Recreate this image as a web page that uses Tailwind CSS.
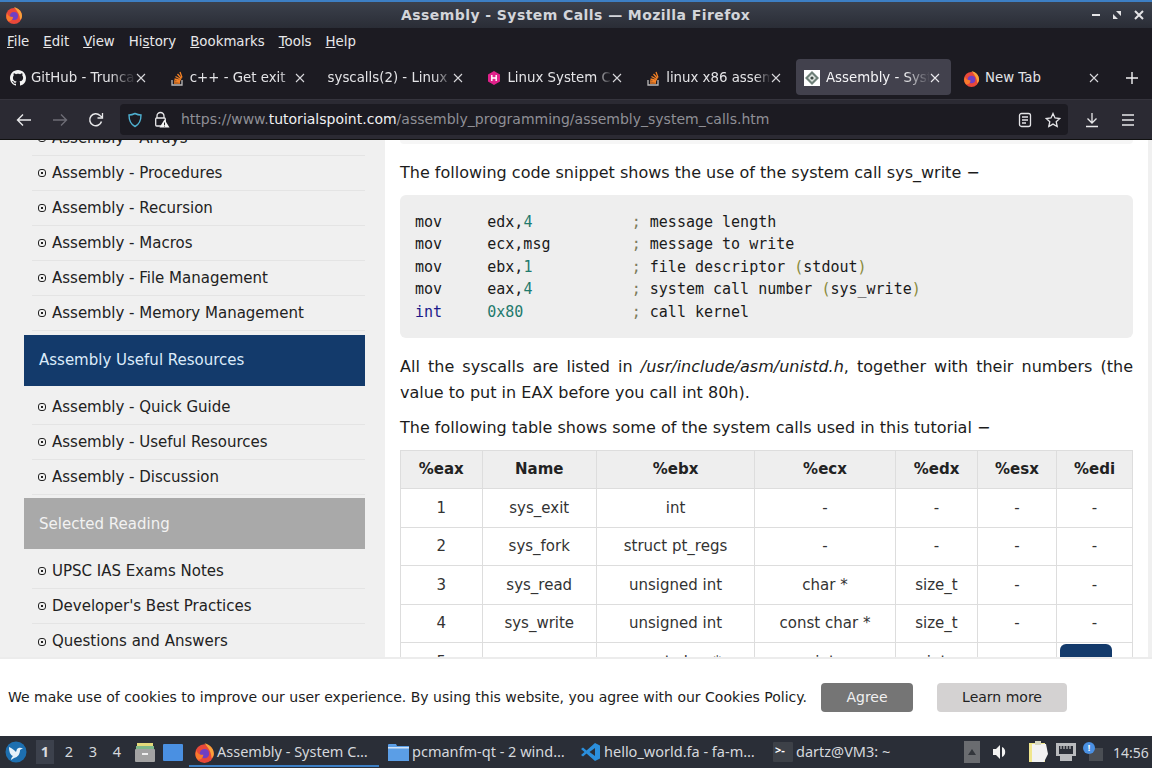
<!DOCTYPE html>
<html lang="en">
<head>
  <meta charset="UTF-8">
  <title>Assembly - System Calls</title>
  <script src="https://cdn.jsdelivr.net/npm/@tailwindcss/browser@4"></script>
</head>
<body class="w-[1152px] h-[768px] overflow-hidden flex flex-col bg-[#1c1b22] font-['DejaVu_Sans',sans-serif]">

  <!-- Window title bar -->
  <div class="h-[2px] bg-[#3d7fc4]"></div>
  <div class="h-[26px] flex items-center bg-gradient-to-b from-[#3c414c] to-[#2a2d36]">
    <div class="w-[401px] pl-[5px] flex">
      <svg class="w-[18px] h-[18px]" viewBox="0 0 18 18"><circle cx="9" cy="10" r="8" fill="#e8483a"/><path d="M9 1c4 1 8 4 8 9 0 2-1 3-2 4 0-5-2-8-6-13z" fill="#f9a13a"/><circle cx="9" cy="10" r="4" fill="#6f3fc4"/><path d="M2 7c1 3 3 4 6 4 0 2-2 5-5 4-2-2-2-5-1-8z" fill="#f97a2c"/></svg>
    </div>
    <div class="w-[349px] text-[14px] font-bold text-[#d3d5da] tracking-[0.43px] whitespace-nowrap">Assembly - System Calls — Mozilla Firefox</div>
    <div class="flex-1 flex justify-end items-center gap-[12px] pr-[8px]">
      <div class="w-[8px] h-[2px] bg-[#e4e4e6]"></div>
      <svg class="w-[10px] h-[10px]" viewBox="0 0 10 10" fill="#e4e4e6"><path d="M4 1h5v5zM6 9H1V4z"/></svg>
      <svg class="w-[10px] h-[10px]" viewBox="0 0 10 10" stroke="#e4e4e6" stroke-width="2"><path d="M1 1l8 8M9 1l-8 8"/></svg>
    </div>
  </div>

  <!-- Menu bar -->
  <div class="h-[26px] pt-[2px] flex items-center gap-[14px] pl-[7px] bg-[#1c1b22] text-[13.33px] text-[#e8e8ea]">
    <span><u>F</u>ile</span><span><u>E</u>dit</span><span><u>V</u>iew</span><span>Hi<u>s</u>tory</span><span><u>B</u>ookmarks</span><span><u>T</u>ools</span><span><u>H</u>elp</span>
  </div>

  <!-- Tab strip -->
  <div class="h-[45px] pt-[1px] flex items-center bg-[#1c1b22] text-[13.33px] text-[#e4e4e7]">
    <div class="w-[158.8px] h-[36px] pt-[2px] flex items-center pl-[10px] pr-[13px] shrink-0">
      <svg class="w-[16px] h-[16px] mr-[5px] shrink-0" viewBox="0 0 16 16" fill="#f4f4f4"><path d="M8 0C3.58 0 0 3.58 0 8c0 3.54 2.29 6.53 5.47 7.59.4.07.55-.17.55-.38 0-.19-.01-.82-.01-1.49-2.01.37-2.53-.49-2.69-.94-.09-.23-.48-.94-.82-1.13-.28-.15-.68-.52-.01-.53.63-.01 1.08.58 1.23.82.72 1.21 1.87.87 2.33.66.07-.52.28-.87.51-1.07-1.78-.2-3.64-.89-3.64-3.95 0-.87.31-1.59.82-2.15-.08-.2-.36-1.02.08-2.12 0 0 .67-.21 2.2.82.64-.18 1.32-.27 2-.27s1.36.09 2 .27c1.53-1.04 2.2-.82 2.2-.82.44 1.1.16 1.92.08 2.12.51.56.82 1.27.82 2.15 0 3.07-1.87 3.75-3.65 3.95.29.25.54.73.54 1.48 0 1.07-.01 1.93-.01 2.2 0 .21.15.46.55.38A8.01 8.01 0 0016 8c0-4.42-3.58-8-8-8z"/></svg>
      <span class="flex-1 overflow-hidden whitespace-nowrap [mask-image:linear-gradient(to_right,black_75%,transparent)]">GitHub - Truncate</span>
      <svg class="w-[10px] h-[10px] shrink-0" viewBox="0 0 10 10" stroke="#d8d8dc" stroke-width="1.1"><path d="M1 1l8 8M9 1l-8 8"/></svg>
    </div>
    <div class="w-[158.8px] h-[36px] pt-[2px] flex items-center pl-[10px] pr-[13px] shrink-0">
      <svg class="w-[16px] h-[16px] mr-[5px] shrink-0" viewBox="0 0 16 16" fill="none"><path d="M3 10v5h10v-5" stroke="#bcbbbb" stroke-width="1.3"/><path d="M5 13h6M5 11l6 .5M5.5 9l6 1.5M6.5 6.5l5.5 3M8.5 4l4 4.5M11 2l2 5.5" stroke="#f48024" stroke-width="1.3"/></svg>
      <span class="flex-1 overflow-hidden whitespace-nowrap [mask-image:linear-gradient(to_right,black_85%,transparent)]">c++ - Get exit</span>
      <svg class="w-[10px] h-[10px] shrink-0" viewBox="0 0 10 10" stroke="#d8d8dc" stroke-width="1.1"><path d="M1 1l8 8M9 1l-8 8"/></svg>
    </div>
    <div class="w-[158.8px] h-[36px] pt-[2px] flex items-center pl-[10px] pr-[13px] shrink-0">
      <span class="flex-1 overflow-hidden whitespace-nowrap [mask-image:linear-gradient(to_right,black_85%,transparent)]">syscalls(2) - Linux manual</span>
      <svg class="w-[10px] h-[10px] shrink-0" viewBox="0 0 10 10" stroke="#d8d8dc" stroke-width="1.1"><path d="M1 1l8 8M9 1l-8 8"/></svg>
    </div>
    <div class="w-[158.8px] h-[36px] pt-[2px] flex items-center pl-[10px] pr-[13px] shrink-0">
      <svg class="w-[16px] h-[16px] mr-[5px] shrink-0" viewBox="0 0 16 16"><path d="M8 1l6 3.500v7L8 15l-6-3.500v-7z" fill="#e0218a"/><path d="M5.800 5v6M10.200 5v6M5.800 8h4.400" stroke="#fff" stroke-width="1.400"/></svg>
      <span class="flex-1 overflow-hidden whitespace-nowrap [mask-image:linear-gradient(to_right,black_85%,transparent)]">Linux System Call Table</span>
      <svg class="w-[10px] h-[10px] shrink-0" viewBox="0 0 10 10" stroke="#d8d8dc" stroke-width="1.1"><path d="M1 1l8 8M9 1l-8 8"/></svg>
    </div>
    <div class="w-[158.8px] h-[36px] pt-[2px] flex items-center pl-[10px] pr-[13px] shrink-0">
      <svg class="w-[16px] h-[16px] mr-[5px] shrink-0" viewBox="0 0 16 16" fill="none"><path d="M3 10v5h10v-5" stroke="#bcbbbb" stroke-width="1.3"/><path d="M5 13h6M5 11l6 .5M5.5 9l6 1.5M6.5 6.5l5.5 3M8.5 4l4 4.5M11 2l2 5.5" stroke="#f48024" stroke-width="1.3"/></svg>
      <span class="flex-1 overflow-hidden whitespace-nowrap [mask-image:linear-gradient(to_right,black_85%,transparent)]">linux x86 assembly</span>
      <svg class="w-[10px] h-[10px] shrink-0" viewBox="0 0 10 10" stroke="#d8d8dc" stroke-width="1.1"><path d="M1 1l8 8M9 1l-8 8"/></svg>
    </div>
    <div class="w-[155px] mx-[2px] h-[36px] pt-[2px] flex items-center pl-[8px] pr-[11px] shrink-0 rounded-[4px] bg-[#42414d] text-[#f4f4f6]">
      <svg class="w-[16px] h-[16px] mr-[6px] shrink-0" viewBox="0 0 16 16"><rect width="16" height="16" fill="#fff"/><path d="M8 1l7 7-7 7-7-7z" fill="#6e8078"/><path d="M8 4l4 4-4 4-4-4z" fill="#dfe5e1"/><circle cx="8" cy="8" r="1.6" fill="#3d4a44"/></svg>
      <span class="flex-1 overflow-hidden whitespace-nowrap [mask-image:linear-gradient(to_right,black_75%,transparent)]">Assembly - System</span>
      <svg class="w-[10px] h-[10px] shrink-0" viewBox="0 0 10 10" stroke="#ecebef" stroke-width="1.1"><path d="M1 1l8 8M9 1l-8 8"/></svg>
    </div>
    <div class="w-[158.8px] h-[36px] pt-[2px] flex items-center pl-[10px] pr-[13px] shrink-0">
      <svg class="w-[17px] h-[17px] mr-[5px] shrink-0" viewBox="0 0 18 18"><circle cx="9" cy="10" r="8" fill="#e8483a"/><path d="M9 1c4 1 8 4 8 9 0 2-1 3-2 4 0-5-2-8-6-13z" fill="#f9a13a"/><circle cx="9" cy="10" r="4" fill="#6f3fc4"/><path d="M2 7c1 3 3 4 6 4 0 2-2 5-5 4-2-2-2-5-1-8z" fill="#f97a2c"/></svg>
      <span class="flex-1 overflow-hidden whitespace-nowrap">New Tab</span>
      <svg class="w-[10px] h-[10px] shrink-0" viewBox="0 0 10 10" stroke="#d8d8dc" stroke-width="1.1"><path d="M1 1l8 8M9 1l-8 8"/></svg>
    </div>
    <div class="flex-1 flex justify-center pt-[2px]">
      <svg class="w-[14px] h-[14px]" viewBox="0 0 14 14" stroke="#f2f2f4" stroke-width="1.4"><path d="M7 1v12M1 7h12"/></svg>
    </div>
  </div>

  <!-- Nav bar -->
  <div class="h-[41px] flex items-center bg-[#2b2a33] border-t border-[#35343d] border-b border-b-[#111]">
    <div class="w-[120px] flex items-center shrink-0">
      <div class="w-[48px] flex justify-center"><svg class="w-[16px] h-[16px]" viewBox="0 0 16 16" fill="none" stroke="#e8e8ea" stroke-width="1.4"><path d="M15 8H1.500M7 2.500L1.500 8 7 13.500"/></svg></div>
      <div class="w-[24px] flex justify-center"><svg class="w-[16px] h-[16px]" viewBox="0 0 16 16" fill="none" stroke="#6d6c75" stroke-width="1.4"><path d="M1 8h13.500M9 2.500L14.500 8 9 13.500"/></svg></div>
      <div class="w-[48px] flex justify-center"><svg class="w-[16px] h-[16px]" viewBox="0 0 16 16" fill="none" stroke="#e8e8ea" stroke-width="1.5"><path d="M13.500 9.500A6 6 0 1 1 12 3.500L14.500 5.500"/><path d="M14.500 1v5h-5" stroke-width="1.3"/></svg></div>
    </div>
    <div class="w-[948px] h-[31px] flex items-center rounded-[4px] bg-[#1c1b22] shrink-0">
      <div class="w-[23px] flex justify-end"><svg class="w-[16px] h-[16px]" viewBox="0 0 16 16" fill="none" stroke="#4fb0d0" stroke-width="1.4"><path d="M8 1.500c2 1 4 1.500 6 1.500 0 6-2 9.500-6 11.500C4 12.500 2 9 2 3c2 0 4-.5 6-1.500z"/></svg></div>
      <div class="w-[27px] flex justify-end"><svg class="w-[17px] h-[17px]" viewBox="0 0 17 17"><path d="M4 7V5a3.500 3.500 0 017 0v2" fill="none" stroke="#e8e8ea" stroke-width="1.3"/><rect x="2.700" y="7" width="9.600" height="8" rx="1" fill="none" stroke="#e8e8ea" stroke-width="1.3"/><path d="M11.500 8.500l5 8h-10z" fill="#f4f4f4"/><path d="M11.500 11.500v2.500M11.500 14.700v.8" stroke="#222" stroke-width="1"/></svg></div>
      <div class="ml-[11px] w-[820px] text-[14px] whitespace-nowrap text-[#8f8f96]">https://www.<span class="text-[#f0f0f2]">tutorialspoint.com</span>/assembly_programming/assembly_system_calls.htm</div>
      <div class="flex-1 flex items-center justify-end gap-[12px] pr-[7px]">
        <svg class="w-[16px] h-[16px]" viewBox="0 0 16 16" fill="none" stroke="#e4e4e7" stroke-width="1.3"><rect x="2.500" y="1.500" width="11" height="13" rx="2"/><path d="M5 5h6M5 8h6M5 11h4"/></svg>
        <svg class="w-[16px] h-[16px]" viewBox="0 0 16 16" fill="none" stroke="#e4e4e7" stroke-width="1.3"><path d="M8 1.500l2 4.400 4.700.6-3.500 3.200 1 4.800L8 12.100l-4.200 2.400 1-4.800L1.300 6.500 6 5.900z"/></svg>
      </div>
    </div>
    <div class="flex-1 flex items-center">
      <div class="w-[48px] flex justify-center"><svg class="w-[16px] h-[16px]" viewBox="0 0 16 16" fill="none" stroke="#e8e8ea" stroke-width="1.3"><path d="M8 1v10M3.500 6.500L8 11l4.500-4.500M2 14.500h12"/></svg></div>
      <div class="w-[24px] flex justify-center"><svg class="w-[16px] h-[16px]" viewBox="0 0 16 16" stroke="#e8e8ea" stroke-width="1.4"><path d="M2 3h12M2 8h12M2 13h12"/></svg></div>
    </div>
  </div>

  <!-- Page -->
  <div class="relative h-[517px] flex overflow-hidden bg-[#f0f0f0] text-[16px] text-[#1c1c1c]">
    <aside class="w-[385px] shrink-0 pl-[24px] pr-[20px]">
      <nav class="-mt-[19px] text-[15px] text-[#222]">
        <div class="h-[35px] ml-[8px] flex items-center gap-[6px] border-b border-[#e4e4e4]"><span class="w-[8px] h-[8px] ml-[6px] rounded-[3px] border-[1.5px] border-[#222] flex items-center justify-center"><span class="w-[2px] h-[2px] bg-[#222]"></span></span>Assembly - Arrays</div>
        <div class="h-[35px] ml-[8px] flex items-center gap-[6px] border-b border-[#e4e4e4]"><span class="w-[8px] h-[8px] ml-[6px] rounded-[3px] border-[1.5px] border-[#222] flex items-center justify-center"><span class="w-[2px] h-[2px] bg-[#222]"></span></span>Assembly - Procedures</div>
        <div class="h-[35px] ml-[8px] flex items-center gap-[6px] border-b border-[#e4e4e4]"><span class="w-[8px] h-[8px] ml-[6px] rounded-[3px] border-[1.5px] border-[#222] flex items-center justify-center"><span class="w-[2px] h-[2px] bg-[#222]"></span></span>Assembly - Recursion</div>
        <div class="h-[35px] ml-[8px] flex items-center gap-[6px] border-b border-[#e4e4e4]"><span class="w-[8px] h-[8px] ml-[6px] rounded-[3px] border-[1.5px] border-[#222] flex items-center justify-center"><span class="w-[2px] h-[2px] bg-[#222]"></span></span>Assembly - Macros</div>
        <div class="h-[35px] ml-[8px] flex items-center gap-[6px] border-b border-[#e4e4e4]"><span class="w-[8px] h-[8px] ml-[6px] rounded-[3px] border-[1.5px] border-[#222] flex items-center justify-center"><span class="w-[2px] h-[2px] bg-[#222]"></span></span>Assembly - File Management</div>
        <div class="h-[35px] ml-[8px] flex items-center gap-[6px] border-b border-[#e4e4e4]"><span class="w-[8px] h-[8px] ml-[6px] rounded-[3px] border-[1.5px] border-[#222] flex items-center justify-center"><span class="w-[2px] h-[2px] bg-[#222]"></span></span>Assembly - Memory Management</div>
        <div class="h-[51px] mt-[4px] mb-[4px] pl-[15px] flex items-center bg-[#133a6b] text-[#dcebfa]">Assembly Useful Resources</div>
        <div class="h-[35px] ml-[8px] flex items-center gap-[6px] border-b border-[#e4e4e4]"><span class="w-[8px] h-[8px] ml-[6px] rounded-[3px] border-[1.5px] border-[#222] flex items-center justify-center"><span class="w-[2px] h-[2px] bg-[#222]"></span></span>Assembly - Quick Guide</div>
        <div class="h-[35px] ml-[8px] flex items-center gap-[6px] border-b border-[#e4e4e4]"><span class="w-[8px] h-[8px] ml-[6px] rounded-[3px] border-[1.5px] border-[#222] flex items-center justify-center"><span class="w-[2px] h-[2px] bg-[#222]"></span></span>Assembly - Useful Resources</div>
        <div class="h-[35px] ml-[8px] flex items-center gap-[6px] border-b border-[#e4e4e4]"><span class="w-[8px] h-[8px] ml-[6px] rounded-[3px] border-[1.5px] border-[#222] flex items-center justify-center"><span class="w-[2px] h-[2px] bg-[#222]"></span></span>Assembly - Discussion</div>
        <div class="h-[51px] mt-[3px] mb-[5px] pl-[15px] pt-[2px] flex items-center bg-[#a9a9a9] text-[#f2f2f2]">Selected Reading</div>
        <div class="h-[35px] ml-[8px] flex items-center gap-[6px] border-b border-[#e4e4e4]"><span class="w-[8px] h-[8px] ml-[6px] rounded-[3px] border-[1.5px] border-[#222] flex items-center justify-center"><span class="w-[2px] h-[2px] bg-[#222]"></span></span>UPSC IAS Exams Notes</div>
        <div class="h-[35px] ml-[8px] flex items-center gap-[6px] border-b border-[#e4e4e4]"><span class="w-[8px] h-[8px] ml-[6px] rounded-[3px] border-[1.5px] border-[#222] flex items-center justify-center"><span class="w-[2px] h-[2px] bg-[#222]"></span></span>Developer's Best Practices</div>
        <div class="h-[35px] ml-[8px] flex items-center gap-[6px]"><span class="w-[8px] h-[8px] ml-[6px] rounded-[3px] border-[1.5px] border-[#222] flex items-center justify-center"><span class="w-[2px] h-[2px] bg-[#222]"></span></span>Questions and Answers</div>
      </nav>
    </aside>

    <main class="w-[763px] shrink-0 bg-white px-[15px] leading-[26px]">
      <div class="h-[4px] rounded-b-[6px] bg-[#f6f6f6]"></div>
      <p class="mt-[16px]">The following code snippet shows the use of the system call sys_write −</p>
      <pre class="mt-[9px] px-[15px] pt-[15.5px] pb-[14.5px] rounded-[6px] bg-[#eeeeee] font-['DejaVu_Sans_Mono',monospace] text-[15px] leading-[22.5px] text-[#1a1a1a]">mov     edx,<span class="text-[#1f7a6d]">4</span>           <span class="text-[#7a7a5a]">;</span> message length
mov     ecx,msg         <span class="text-[#7a7a5a]">;</span> message to write
mov     ebx,<span class="text-[#1f7a6d]">1</span>           <span class="text-[#7a7a5a]">;</span> file descriptor <span class="text-[#8a8a3a]">(</span>stdout<span class="text-[#8a8a3a]">)</span>
mov     eax,<span class="text-[#1f7a6d]">4</span>           <span class="text-[#7a7a5a]">;</span> system call number <span class="text-[#8a8a3a]">(</span>sys_write<span class="text-[#8a8a3a]">)</span>
<span class="text-[#1a1a8a]">int</span>     <span class="text-[#1f7a6d]">0x80</span>            <span class="text-[#7a7a5a]">;</span> call kernel</pre>
      <p class="mt-[16.5px] text-justify">All the syscalls are listed in <i>/usr/include/asm/unistd.h</i>, together with their numbers (the value to put in EAX before you call int 80h).</p>
      <p class="mt-[9px]">The following table shows some of the system calls used in this tutorial −</p>
      <table class="mt-[9px] w-[733px] table-fixed border-collapse text-center text-[15px] text-[#333] border border-[#dddddd]">
        <thead class="bg-[#eeeeee] text-[#222]">
          <tr class="h-[38px]">
            <th class="w-[81.5px] pb-[2px] border border-[#dddddd] font-bold">%eax</th>
            <th class="w-[114.5px] pb-[2px] border border-[#dddddd] font-bold">Name</th>
            <th class="w-[158px] pb-[2px] border border-[#dddddd] font-bold">%ebx</th>
            <th class="w-[141px] pb-[2px] border border-[#dddddd] font-bold">%ecx</th>
            <th class="w-[82px] pb-[2px] border border-[#dddddd] font-bold">%edx</th>
            <th class="w-[79px] pb-[2px] border border-[#dddddd] font-bold">%esx</th>
            <th class="pb-[2px] border border-[#dddddd] font-bold">%edi</th>
          </tr>
        </thead>
        <tbody>
          <tr class="h-[38.5px]"><td class="border border-[#dddddd]">1</td><td class="border border-[#dddddd]">sys_exit</td><td class="border border-[#dddddd]">int</td><td class="border border-[#dddddd]">-</td><td class="border border-[#dddddd]">-</td><td class="border border-[#dddddd]">-</td><td class="border border-[#dddddd]">-</td></tr>
          <tr class="h-[38.5px]"><td class="border border-[#dddddd]">2</td><td class="border border-[#dddddd]">sys_fork</td><td class="border border-[#dddddd]">struct pt_regs</td><td class="border border-[#dddddd]">-</td><td class="border border-[#dddddd]">-</td><td class="border border-[#dddddd]">-</td><td class="border border-[#dddddd]">-</td></tr>
          <tr class="h-[38.5px]"><td class="border border-[#dddddd]">3</td><td class="border border-[#dddddd]">sys_read</td><td class="border border-[#dddddd]">unsigned int</td><td class="border border-[#dddddd]">char *</td><td class="border border-[#dddddd]">size_t</td><td class="border border-[#dddddd]">-</td><td class="border border-[#dddddd]">-</td></tr>
          <tr class="h-[38.5px]"><td class="border border-[#dddddd]">4</td><td class="border border-[#dddddd]">sys_write</td><td class="border border-[#dddddd]">unsigned int</td><td class="border border-[#dddddd]">const char *</td><td class="border border-[#dddddd]">size_t</td><td class="border border-[#dddddd]">-</td><td class="border border-[#dddddd]">-</td></tr>
          <tr class="h-[38.5px]"><td class="border border-[#dddddd]">5</td><td class="border border-[#dddddd]">sys_open</td><td class="border border-[#dddddd]">const char *</td><td class="border border-[#dddddd]">int</td><td class="border border-[#dddddd]">int</td><td class="border border-[#dddddd]">-</td><td class="border border-[#dddddd]">-</td></tr>
        </tbody>
      </table>
    </main>

    <!-- back to top button, sits over the table -->
    <div class="absolute left-[1060px] top-[504px] w-[52px] h-[40px] rounded-[6px] bg-[#133a6b]"></div>
  </div>

  <!-- Cookie banner -->
  <div class="h-[79px] flex items-center pl-[8px] bg-white border-t-2 border-[#ececec] text-[14px] text-[#1c1c1c]">
    <span class="whitespace-nowrap">We make use of cookies to improve our user experience. By using this website, you agree with our Cookies Policy.</span>
    <div class="ml-[14px] w-[92px] h-[29px] flex items-center justify-center rounded-[4px] bg-[#757575] text-[#f0f0f0]">Agree</div>
    <div class="ml-[24px] w-[130px] h-[29px] flex items-center justify-center rounded-[4px] bg-[#d4d2d2] text-[#222]">Learn more</div>
  </div>

  <!-- Taskbar -->
  <div class="h-[32px] flex items-center bg-[#2a2e37] text-[14.5px] text-[#d5d8dd] font-['Noto_Sans',sans-serif]">
    <div class="w-[32px] flex justify-center shrink-0">
      <svg class="w-[22px] h-[22px]" viewBox="0 0 22 22"><circle cx="11" cy="11" r="10.5" fill="#1d6fb0"/><path d="M4 6c3 1 5 3 7 5l1-3c2-2 4-1 6-1l-3 2c0 4-2 7-6 8l-3 2c0-2 1-3 2-4-3-1-4-5-4-9z" fill="#e8f2fa"/></svg>
    </div>
    <div class="w-[18px] ml-[4px] h-[24px] flex items-center justify-center bg-[#3c414c] font-bold text-[#d8dade] shrink-0">1</div>
    <div class="w-[24px] ml-[3px] text-center shrink-0">2</div>
    <div class="w-[24px] text-center shrink-0">3</div>
    <div class="w-[24px] text-center shrink-0">4</div>
    <svg class="w-[20px] h-[22px] ml-[6px] shrink-0" viewBox="0 0 20 22"><path d="M2 2h16v3H2z" fill="#e3d97a"/><path d="M1 5h18v3H1z" fill="#7fb78a"/><rect y="8" width="20" height="13" rx="1" fill="#a3a3a3"/><rect x="7" y="12" width="6" height="2" fill="#f0f0f0"/></svg>
    <div class="w-[20px] h-[17px] ml-[8px] bg-[#4a90e2] rounded-[1px] shrink-0"></div>
    <div class="relative w-[190px] h-[32px] ml-[6px] pl-[5px] flex items-center gap-[2px] shrink-0">
      <svg class="w-[21px] h-[21px] shrink-0" viewBox="0 0 18 18"><circle cx="9" cy="10" r="8" fill="#e8483a"/><path d="M9 1c4 1 8 4 8 9 0 2-1 3-2 4 0-5-2-8-6-13z" fill="#f9a13a"/><circle cx="9" cy="10" r="4" fill="#6f3fc4"/><path d="M2 7c1 3 3 4 6 4 0 2-2 5-5 4-2-2-2-5-1-8z" fill="#f97a2c"/></svg>
      <span class="whitespace-nowrap">Assembly - System C…</span>
      <div class="absolute left-0 right-0 bottom-[1px] h-[2px] bg-[#3d7fc4]"></div>
    </div>
    <div class="w-[194px] ml-[8px] pl-[1px] flex items-center gap-[3px] shrink-0">
      <svg class="w-[21px] h-[20px] shrink-0" viewBox="0 0 21 20"><path d="M0 3a1 1 0 011-1h7l1 2h12v15H0z" fill="#5b9ee6"/><rect y="5" width="21" height="1.5" fill="#cfe2f7"/></svg>
      <span class="whitespace-nowrap">pcmanfm-qt - 2 wind…</span>
    </div>
    <div class="w-[192px] flex items-center gap-[3px] shrink-0">
      <svg class="w-[20px] h-[20px] shrink-0" viewBox="0 0 20 20"><path d="M14 1l5 2.500v13L14 19 5.500 11.500 2 14.500 0 13l3.500-3L0 7l2-1.500 3.500 3z" fill="#2b8fdc"/><path d="M14 6L8.500 10l5.500 4z" fill="#2a2e37"/></svg>
      <span class="whitespace-nowrap">hello_world.fa - fa-m…</span>
    </div>
    <div class="w-[191px] flex items-center gap-[3px] shrink-0">
      <div class="w-[20px] h-[20px] bg-[#3d4148] rounded-[1px] shrink-0 text-[11px] leading-[16px] text-white font-bold pl-[2px]">&gt;-</div>
      <span class="whitespace-nowrap">dartz@VM3: ~</span>
    </div>
    <div class="flex-1 flex items-center">
      <div class="w-[16px] h-[22px] bg-[#6a6c70] flex items-center justify-center shrink-0"><span class="w-[8px] h-[6px] [clip-path:polygon(50%_0,100%_100%,0_100%)] bg-[#33363c]"></span></div>
      <svg class="w-[16px] h-[16px] ml-[12px] shrink-0" viewBox="0 0 16 16" fill="#f2f2f2"><path d="M1 5h3l4-4v14l-4-4H1z"/><path d="M10 3a5.500 5.500 0 010 10z"/></svg>
      <svg class="w-[20px] h-[22px] ml-[20px] shrink-0" viewBox="0 0 20 22"><rect x="1" y="2" width="16" height="19" fill="#f0e68c"/><path d="M4 3h14l2 10-4 8H4z" fill="#f2f2f2"/><rect x="7" y="0" width="6" height="4" fill="#d8d8c0"/></svg>
      <svg class="w-[20px] h-[18px] ml-[8px] shrink-0" viewBox="0 0 20 18"><path d="M0 0h20v13h-4v5H4v-5H0z" fill="#b9bbbe"/><rect x="3" y="3" width="14" height="8" fill="#2a2e37"/><path d="M5 3v3M8 3v3M11 3v3M14 3v3" stroke="#e0e0e0"/></svg>
      <div class="relative w-[20px] h-[20px] ml-[7px] shrink-0">
        <div class="absolute right-0 bottom-[1px] w-[14px] h-[13px] bg-[#4a4e54]"></div>
        <div class="absolute left-0 top-0 w-[12px] h-[12px] rounded-full bg-[#4a90e2] text-[9px] leading-[12px] text-center font-bold text-white">!</div>
      </div>
      <span class="ml-[10px] text-[14px]">14:56</span>
    </div>
  </div>
</body>
</html>
